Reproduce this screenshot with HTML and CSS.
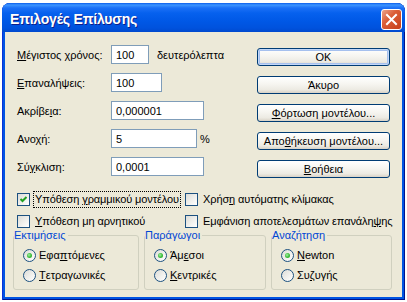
FILE: index.html
```html
<!DOCTYPE html>
<html lang="el">

<head>
    <meta charset="UTF-8">
    <title>Επιλογές Επίλυσης</title>
    <link rel="stylesheet" href="styles.css">
</head>

<body>
    <div class="window">
        <div class="titlebar">
            <span class="title">Επιλογές Επίλυσης</span>
            <span class="close">
                <svg width="19" height="19" viewBox="0 0 19 19">
                    <path d="M5 5 L14 14 M14 5 L5 14" stroke="#fff" stroke-width="2" stroke-linecap="square" />
                </svg>
            </span>
        </div>

        <div class="client">
            <div class="top">
                <div class="form">
                    <div class="row">
                        <label><u>Μ</u>έγιστος χρόνος:</label>
                        <input class="field" style="width: 38px" type="text" value="100">
                        <span class="unit">δευτερόλεπτα</span>
                    </div>
                    <div class="row">
                        <label><u>Ε</u>παναλήψεις:</label>
                        <input class="field" style="width: 51px" type="text" value="100">
                    </div>
                    <div class="row">
                        <label>Ακρίβε<u>ι</u>α:</label>
                        <input class="field" style="width: 93px" type="text" value="0,000001">
                    </div>
                    <div class="row">
                        <label>Ανο<u>χ</u>ή:</label>
                        <input class="field" style="width: 86px" type="text" value="5">
                        <span class="pct">%</span>
                    </div>
                    <div class="row">
                        <label>Σύ<u>γ</u>κλιση:</label>
                        <input class="field" style="width: 93px" type="text" value="0,0001">
                    </div>
                </div>

                <div class="buttons">
                    <button class="btn default">OK</button>
                    <button class="btn">Άκυρο</button>
                    <button class="btn"><u>Φ</u>όρτωση μοντέλου...</button>
                    <button class="btn">Απο<u>θ</u>ήκευση μοντέλου...</button>
                    <button class="btn"><u>Β</u>οήθεια</button>
                </div>
            </div>

            <div class="checks">
                <div class="check">
                    <span class="box">
                        <svg width="11" height="11" viewBox="0 0 11 11">
                            <path d="M2.5 5 L4.5 7 L8.5 3" stroke="#21A121" stroke-width="2" fill="none" />
                        </svg>
                    </span>
                    <span class="text focus">Υπόθεση <u>γ</u>ραμμικού μοντέλου</span>
                </div>
                <div class="check">
                    <span class="box"></span>
                    <span class="text">Χρήσ<u>η</u> αυτόματης κλίμακας</span>
                </div>
                <div class="check">
                    <span class="box"></span>
                    <span class="text"><u>Υ</u>πόθεση μη αρνητικού</span>
                </div>
                <div class="check">
                    <span class="box"></span>
                    <span class="text">Εμφάνιση αποτελεσμάτων επανάλη<u>ψ</u>ης</span>
                </div>
            </div>

            <div class="groups">
                <fieldset class="group">
                    <legend>Εκτιμήσεις</legend>
                    <div class="option"><span class="radio on"></span>Εφα<u>π</u>τόμενες</div>
                    <div class="option"><span class="radio"></span><u>Τ</u>ετραγωνικές</div>
                </fieldset>
                <fieldset class="group">
                    <legend>Παράγωγοι</legend>
                    <div class="option"><span class="radio on"></span>Άμ<u>ε</u>σοι</div>
                    <div class="option"><span class="radio"></span><u>Κ</u>εντρικές</div>
                </fieldset>
                <fieldset class="group">
                    <legend>Αναζήτηση</legend>
                    <div class="option"><span class="radio on"></span><u>N</u>ewton</div>
                    <div class="option"><span class="radio"></span>Συ<u>ζ</u>υγής</div>
                </fieldset>
            </div>
        </div>
    </div>
</body>

</html>
```

FILE: styles.css
```css
body {
    margin: 0;
    background: #fff;
    font-family: "Liberation Sans", Arial, sans-serif;
    font-size: 11px;
    color: #000;
}

u {
    text-decoration-thickness: 1px;
    text-underline-offset: 1px;
}

.window {
    margin: 3px 0 0 2px;
    width: 403px;
    height: 297px;
    box-sizing: border-box;
    background: #0054E3;
    border-radius: 8px 8px 0 0;
    display: flex;
    flex-direction: column;
    box-shadow: inset 1px 0 #0831D9, inset -1px 0 #00138C, inset 0 -1px #00138C;
}

.titlebar {
    flex: none;
    height: 29px;
    display: flex;
    align-items: center;
    padding: 3px 3px 0 8px;
    box-sizing: border-box;
    border-radius: 8px 8px 0 0;
    background: linear-gradient(180deg, #0A5DEB 0, #3D95FF 2px, #1C70F6 5px, #0661EE 10px, #0058E6 18px, #0052DD 25px, #0049CE 29px);
}

.title {
    color: #fff;
    font-weight: bold;
    font-size: 14px;
    letter-spacing: -0.2px;
    text-shadow: 1px 1px #0F1E89;
}

.close {
    margin-left: auto;
    width: 21px;
    height: 21px;
    box-sizing: border-box;
    border: 1px solid #fff;
    border-radius: 3px;
    background: linear-gradient(135deg, #EBA48C 0%, #DB5E37 40%, #C6401A 100%);
    display: flex;
    align-items: center;
    justify-content: center;
}

.client {
    flex: 1;
    margin: 0 3px 3px 3px;
    padding: 0 12px;
    background: #ECE9D8;
}

.top {
    display: flex;
    justify-content: space-between;
}

.form {
    padding-top: 13px;
    display: flex;
    flex-direction: column;
    gap: 9px;
}

.row {
    display: flex;
    align-items: center;
    height: 19px;
}

.row label {
    width: 94px;
}

.field {
    height: 19px;
    box-sizing: border-box;
    margin: 0;
    padding: 0 4px;
    border: 1px solid #7F9DB9;
    background: #fff;
    font: inherit;
    color: #000;
    outline: none;
}

.unit {
    margin-left: 8px;
}

.pct {
    margin-left: 3px;
}

.buttons {
    padding-top: 16px;
    width: 133px;
    display: flex;
    flex-direction: column;
    gap: 10px;
}

.btn {
    height: 18px;
    box-sizing: border-box;
    padding: 0;
    border: 1px solid #003C74;
    border-radius: 3px;
    background: linear-gradient(180deg, #FFFFFF 0%, #F6F5F0 45%, #ECEAE2 80%, #D8D2C6 100%);
    font: inherit;
    color: #000;
}

.btn.default {
    box-shadow: inset 0 0 0 1px #C2D7F8, inset 0 0 0 2px #A5C0EE;
}

.checks {
    margin-top: 13px;
    display: grid;
    grid-template-columns: 168px 1fr;
    row-gap: 6px;
}

.check {
    display: flex;
    align-items: center;
    height: 16px;
    white-space: nowrap;
    letter-spacing: -0.1px;
}

.box {
    width: 13px;
    height: 13px;
    box-sizing: border-box;
    margin-right: 3px;
    border: 1px solid #1C5180;
    background: linear-gradient(135deg, #DCDCD7 0%, #F2F2EF 60%, #FFFFFF 100%);
    display: flex;
}

.check .text {
    padding: 1px 1px 2px;
    border: 1px dotted transparent;
}

.check .text.focus {
    border-color: #000;
}

.groups {
    margin: 0 -1px 0 -4px;
    display: grid;
    grid-template-columns: 126px 122px 121px;
    column-gap: 5px;
}

.group {
    margin: 0;
    padding: 5px 0 6px;
    border: 1px solid #D0D0BF;
    border-radius: 3px;
    min-width: 0;
}

.group legend {
    padding: 0 2px 0 0;
    line-height: 13px;
    color: #0046D5;
}

.option {
    display: flex;
    align-items: center;
    height: 16px;
    padding-left: 9px;
}

.option + .option {
    margin-top: 4px;
}

.radio {
    width: 13px;
    height: 13px;
    box-sizing: border-box;
    margin-right: 3px;
    border: 1px solid #1C5180;
    border-radius: 50%;
    background: linear-gradient(135deg, #DCDCD7 0%, #F2F2EF 60%, #FFFFFF 100%);
    display: flex;
    align-items: center;
    justify-content: center;
}

.radio.on::after {
    content: "";
    width: 5px;
    height: 5px;
    border-radius: 50%;
    background: radial-gradient(circle at 40% 40%, #A6EFA6 0%, #3FBF3F 50%, #21A121 100%);
}
```
